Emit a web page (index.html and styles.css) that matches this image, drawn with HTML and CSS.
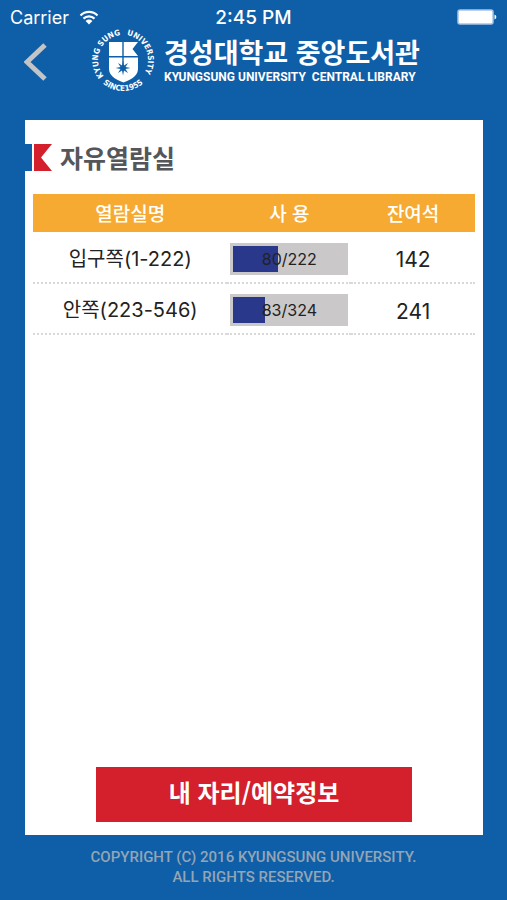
FILE: index.html
```
<!DOCTYPE html>
<html lang="ko">
<head>
  <meta charset="UTF-8">
  <meta name="viewport" content="width=device-width, initial-scale=1">
  <title>경성대학교 중앙도서관</title>
  <link rel="stylesheet" href="styles.css">
</head>
<body>
  <div class="status-bar">
    <div class="carrier">
      <span>Carrier</span>
      <svg class="wifi" width="20" height="15" viewBox="0 0 20 15" aria-hidden="true">
        <path d="M1.500 5.500a12 12 0 0 1 17 0M4.500 8.600a7.800 7.800 0 0 1 11 0" fill="none" stroke="#fff" stroke-width="2.200"/>
        <path d="M6.600 10.900a4.800 4.800 0 0 1 6.800 0L10 14.400z" fill="#fff"/>
      </svg>
    </div>
    <span class="time">2:45 PM</span>
    <div class="battery">
      <svg width="40" height="16" viewBox="0 0 40 16" aria-hidden="true">
        <rect x="1" y="1" width="35" height="14" rx="2" fill="#fff" stroke="#a9c4e2" stroke-width="1.500"/>
        <path d="M37.500 5.500a2.600 2.600 0 0 1 0 5z" fill="#fff"/>
      </svg>
    </div>
  </div>

  <header class="header">
    <button class="back" type="button" aria-label="뒤로">
      <svg width="24" height="38" viewBox="0 0 24 38" aria-hidden="true">
        <path d="M21 2L3 19l18 17" fill="none" stroke="#c2c4c6" stroke-width="5"/>
      </svg>
    </button>
    <div class="brand">
      <svg class="emblem" width="64" height="64" viewBox="0 0 64 64" aria-hidden="true">
        <defs>
          <path id="ring-top" d="M32 57a25 25 0 0 1 0-50a25 25 0 0 1 0 50"/>
          <path id="ring-bottom" d="M1 32a31 31 0 0 0 62 0"/>
        </defs>
        <g class="ring" fill="#fff" text-anchor="middle">
          <text><textPath href="#ring-top" startOffset="23%">KYUNG</textPath></text>
          <text><textPath href="#ring-top" startOffset="41%">SUNG</textPath></text>
          <text><textPath href="#ring-top" startOffset="68%">UNIVERSITY</textPath></text>
          <text><textPath href="#ring-bottom" startOffset="50%">SINCE1955</textPath></text>
        </g>
        <path d="M18 14h13.300v14H18zM32.700 14H47l-5.500 7L47 28H32.700zM18 29.500h13.300v10h1.400v-10H47v11c0 6-4 10-14.500 14C22 50.500 18 46.500 18 40.500z" fill="#fff"/>
        <path d="M32 33l1 4.500 4-2.500-2.500 4 5 1-5 1 2.500 4-4-2.500-1 5-1-5-4 2.500 2.500-4-5-1 5-1-2.500-4 4 2.500z" fill="#0f5ea8"/>
      </svg>
      <div class="brand-name">
        <h1>경성대학교 중앙도서관</h1>
        <p>KYUNGSUNG UNIVERSITY&nbsp; CENTRAL LIBRARY</p>
      </div>
    </div>
  </header>

  <main class="card">
    <div class="title">
      <svg width="27" height="27" viewBox="0 0 27 27" aria-hidden="true">
        <path d="M0 0h7v27H0z" fill="#0f5ea8"/>
        <path d="M9 0h18l-11 13.500L27 27H9z" fill="#d3202c"/>
      </svg>
      <h2>자유열람실</h2>
    </div>

    <div class="rooms-wrap">
      <table class="rooms">
        <thead>
          <tr>
            <th class="col-name">열람실명</th>
            <th class="col-usage">사 용</th>
            <th class="col-seats">잔여석</th>
          </tr>
        </thead>
        <tbody>
          <tr>
            <td>입구쪽(1-222)</td>
            <td class="usage"><div class="bar"><div class="fill" style="width: 40%"></div><span>80/222</span></div></td>
            <td class="seats">142</td>
          </tr>
          <tr>
            <td>안쪽(223-546)</td>
            <td class="usage"><div class="bar"><div class="fill" style="width: 28%"></div><span>83/324</span></div></td>
            <td class="seats">241</td>
          </tr>
        </tbody>
      </table>
    </div>

    <button class="my-seat" type="button">내 자리/예약정보</button>
  </main>

  <footer class="footer">
    COPYRIGHT (C) 2016 KYUNGSUNG UNIVERSITY.<br>
    ALL RIGHTS RESERVED.
  </footer>
</body>
</html>
```
FILE: styles.css
```
:root {
  --blue: #0f5ea8;
  --red: #d3202c;
  --orange: #f7aa31;
  --bar-bg: #cac8c9;
  --bar-fill: #2a388c;
}

* {
  margin: 0;
  padding: 0;
  box-sizing: border-box;
}

body {
  display: flex;
  flex-direction: column;
  min-height: 100vh;
  background: var(--blue);
  font-family: Inter, "Noto Sans CJK KR", sans-serif;
}

button {
  border: none;
  cursor: pointer;
}

/* Status bar */
.status-bar {
  display: grid;
  grid-template-columns: 1fr auto 1fr;
  align-items: center;
  height: 34px;
  padding: 0 10px;
  color: #fff;
  font-size: 18px;
}

.carrier {
  display: flex;
  align-items: center;
  gap: 10px;
}

.time {
  font-size: 19px;
  font-weight: 500;
}

.battery {
  display: flex;
  justify-content: flex-end;
}

/* Header */
.header {
  display: flex;
  align-items: flex-start;
  height: 86px;
  padding-left: 24px;
}

.back {
  width: 24px;
  height: 38px;
  margin-top: 9px;
  background: none;
}

.brand {
  display: flex;
  gap: 9px;
  margin-left: 43px;
}

.emblem {
  flex: none;
  margin-top: -6px;
  overflow: visible;
}

.ring {
  font: bold 8px "DejaVu Sans Condensed", "DejaVu Sans", sans-serif;
}

.brand-name {
  color: #fff;
  white-space: nowrap;
}

.brand-name h1 {
  font: bold 27px/36px "Noto Sans CJK KR", sans-serif;
}

.brand-name p {
  font: bold 12px/14px Roboto, sans-serif;
}

/* Card */
.card {
  display: flex;
  flex: 1;
  flex-direction: column;
  margin: 0 24px 0 25px;
  padding-bottom: 13px;
  background: #fff;
}

.title {
  display: flex;
  align-items: center;
  gap: 8px;
  height: 74px;
}

.title h2 {
  color: #55565a;
  font: bold 25px/36px "Noto Sans CJK KR", sans-serif;
}

.rooms-wrap {
  padding: 0 8px;
}

.rooms {
  width: 100%;
  border-collapse: collapse;
  table-layout: fixed;
  text-align: center;
}

.rooms th {
  height: 38px;
  background: var(--orange);
  color: #fff;
  font: 500 19px/24px "Noto Sans CJK KR", sans-serif;
}

.rooms .col-name {
  width: 44%;
}

.rooms .col-usage,
.rooms .col-seats {
  width: 28%;
}

.rooms td {
  height: 51px;
  border-bottom: 2px dotted #d9d9d9;
  color: #222;
  font-size: 20px;
}

.rooms .usage {
  padding-top: 3px;
}

.rooms .seats {
  padding-top: 5px;
  font-size: 21px;
}

.bar {
  position: relative;
  height: 32px;
  margin: 0 3px;
  border: 3px solid var(--bar-bg);
  background: var(--bar-bg);
}

.fill {
  height: 100%;
  background: var(--bar-fill);
}

/* Count lies over the fill */
.bar span {
  position: absolute;
  inset: 0;
  font-size: 16px;
  line-height: 26px;
}

.my-seat {
  width: 69%;
  height: 55px;
  margin: auto auto 0;
  padding-bottom: 5px;
  background: var(--red);
  color: #fff;
  font: bold 24px/32px "Noto Sans CJK KR", sans-serif;
}

.footer {
  padding: 12px 0 13px;
  color: #93a5b5;
  font: 500 15px/20px Roboto, sans-serif;
  text-align: center;
}
```
